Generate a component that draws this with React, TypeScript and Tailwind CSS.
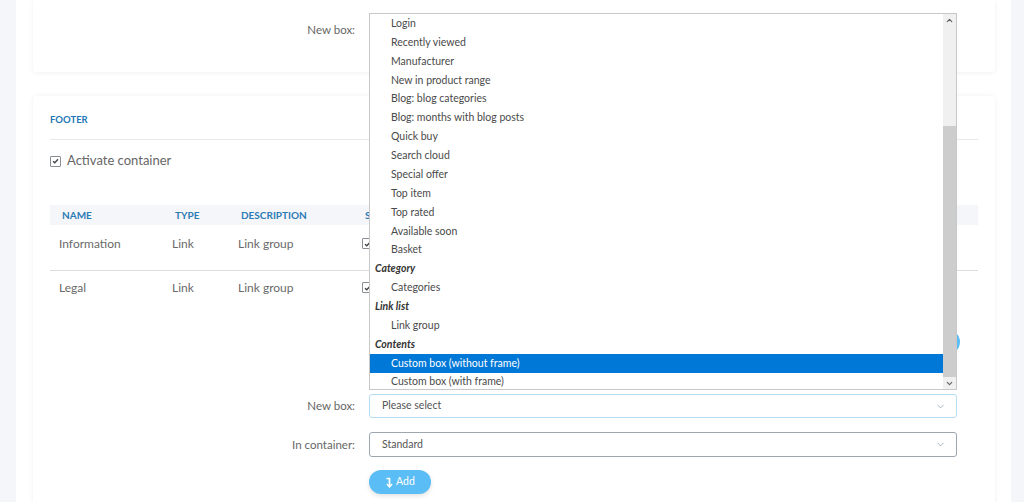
import { ChevronDown, ChevronUp } from 'lucide-react';

const items: { label: string; group?: boolean; active?: boolean }[] = [
  { label: 'Login' },
  { label: 'Recently viewed' },
  { label: 'Manufacturer' },
  { label: 'New in product range' },
  { label: 'Blog: blog categories' },
  { label: 'Blog: months with blog posts' },
  { label: 'Quick buy' },
  { label: 'Search cloud' },
  { label: 'Special offer' },
  { label: 'Top item' },
  { label: 'Top rated' },
  { label: 'Available soon' },
  { label: 'Basket' },
  { label: 'Category', group: true },
  { label: 'Categories' },
  { label: 'Link list', group: true },
  { label: 'Link group' },
  { label: 'Contents', group: true },
  { label: 'Custom box (without frame)', active: true },
  { label: 'Custom box (with frame)' },
];

function Check() {
  return (
    <span className="flex h-[11px] w-[11px] items-center justify-center rounded-[1px] border border-[#8a8f96] bg-white">
      <svg width="7" height="6" viewBox="0 0 7 6" fill="none">
        <path d="M1 3.2 L2.8 4.8 L6 1.2" stroke="#444" strokeWidth="1.3" />
      </svg>
    </span>
  );
}

function Select({ value, border }: { value: string; border: string }) {
  return (
    <div className={`flex w-[588px] items-center justify-between rounded-[3px] border bg-white pl-[12px] pr-[10px] ${border}`}>
      <span className="text-[10.5px] text-[#555]">{value}</span>
      <ChevronDown size={11} strokeWidth={1.5} className="text-[#8593a3]" />
    </div>
  );
}

function Row({ name, top }: { name: string; top: string }) {
  return (
    <div className={`flex h-[45px] items-start text-[12px] leading-[14px] text-[#6a6a6a] ${top}`}>
      <div className="w-[113px] pl-[9px]">{name}</div>
      <div className="w-[66px] pl-[9px]">Link</div>
      <div className="w-[124px] pl-[9px]">Link group</div>
      <div className="pl-[9px] pt-[1px]">
        <Check />
      </div>
    </div>
  );
}

export default function App() {
  return (
    <div className="relative h-[502px] w-[1024px] overflow-hidden bg-[#f5f6fa] font-['Lato',sans-serif]">
      <div className="ml-4 mr-[13px] h-full bg-white pl-[17px] pr-[16px]">
        {/* top card */}
        <div className="h-[72px] rounded-b-[4px] bg-white pt-[18px] shadow-[0_1px_5px_rgba(0,0,0,0.06)]">
          <div className="flex items-center">
            <div className="w-[322px] text-right text-[11.5px] text-[#666]">New box:</div>
            <div className="ml-[14px] h-[24px] w-[588px] rounded-[3px] border border-[#5d6e80] bg-white" />
          </div>
        </div>

        {/* footer card */}
        <div className="mt-[24px] h-[440px] rounded-[4px] bg-white px-[17px] shadow-[0_0_5px_rgba(0,0,0,0.06)]">
          <div className="border-b border-[#e6e8eb] pt-[18px] pb-[13px] text-[9.5px] font-bold leading-[12px] text-[#2277b7]">
            FOOTER
          </div>
          <div className="mt-[15px] flex h-[12px] items-center gap-[6px]">
            <Check />
            <span className="text-[13px] text-[#666]">Activate container</span>
          </div>

          <div className="mt-[38px] flex h-[20px] items-center bg-[#f5f6fa] text-[10px] font-bold text-[#2b7bb5]">
            <div className="w-[113px] pl-[12px]">NAME</div>
            <div className="w-[66px] pl-[12px]">TYPE</div>
            <div className="w-[124px] pl-[12px]">DESCRIPTION</div>
            <div className="pl-[12px]">S</div>
          </div>
          <div className="border-b border-[#dcdcdc]">
            <Row name="Information" top="pt-[12px]" />
          </div>
          <Row name="Legal" top="pt-[10px]" />

          <div className="mt-[14px] flex justify-end pr-[18px]">
            <div className="h-[24px] w-[24px] rounded-full bg-[#5bbdf5]" />
          </div>

          <div className="mt-[40px] flex h-[24px] items-stretch">
            <div className="flex w-[305px] items-center justify-end text-[11.5px] text-[#666]">New box:</div>
            <div className="ml-[14px] flex">
              <Select value="Please select" border="border-[#b5def3]" />
            </div>
          </div>
          <div className="mt-[14px] flex h-[25px] items-stretch">
            <div className="flex w-[305px] items-center justify-end text-[11.5px] text-[#666]">In container:</div>
            <div className="ml-[14px] flex">
              <Select value="Standard" border="border-[#9ca6b1]" />
            </div>
          </div>
          <div className="mt-[13px] pl-[319px]">
            <button className="flex h-[24px] w-[62px] items-center justify-center gap-[3px] rounded-full bg-[#5bbdf5] text-[10.5px] text-white shadow-[0_2px_4px_rgba(0,0,0,0.12)]">
              <svg width="8" height="11" viewBox="0 0 8 11" fill="none">
                <path d="M1.5 1.5 H4.5 V9.5" stroke="white" strokeWidth="1.7" />
                <path d="M2 7 L4.5 9.8 L7 7" stroke="white" strokeWidth="1.7" />
              </svg>
              Add
            </button>
          </div>
        </div>
      </div>

      {/* open native dropdown list */}
      <div className="absolute left-[369px] top-[13px] flex h-[377px] w-[588px] border border-[#c8c8c8] bg-white">
        <div className="flex-1 overflow-hidden pt-[0.5px]">
          {items.map((it) => (
            <div
              key={it.label}
              className={`flex h-[18.86px] items-center text-[10.5px] ${
                it.group
                  ? 'pl-[5px] font-bold italic text-[#333]'
                  : it.active
                    ? 'bg-[#0078d7] pl-[21px] text-white'
                    : 'pl-[21px] text-[#4a4a4a]'
              }`}
            >
              {it.label}
            </div>
          ))}
        </div>
        <div className="flex w-[13px] flex-col bg-[#f0f0f0]">
          <div className="flex h-[13px] items-center justify-center">
            <ChevronUp size={9} strokeWidth={3} className="text-[#606060]" />
          </div>
          <div className="h-[99px]" />
          <div className="flex-1 bg-[#cdcdcd]" />
          <div className="flex h-[12px] items-center justify-center">
            <ChevronDown size={9} strokeWidth={3} className="text-[#606060]" />
          </div>
        </div>
      </div>
    </div>
  );
}
